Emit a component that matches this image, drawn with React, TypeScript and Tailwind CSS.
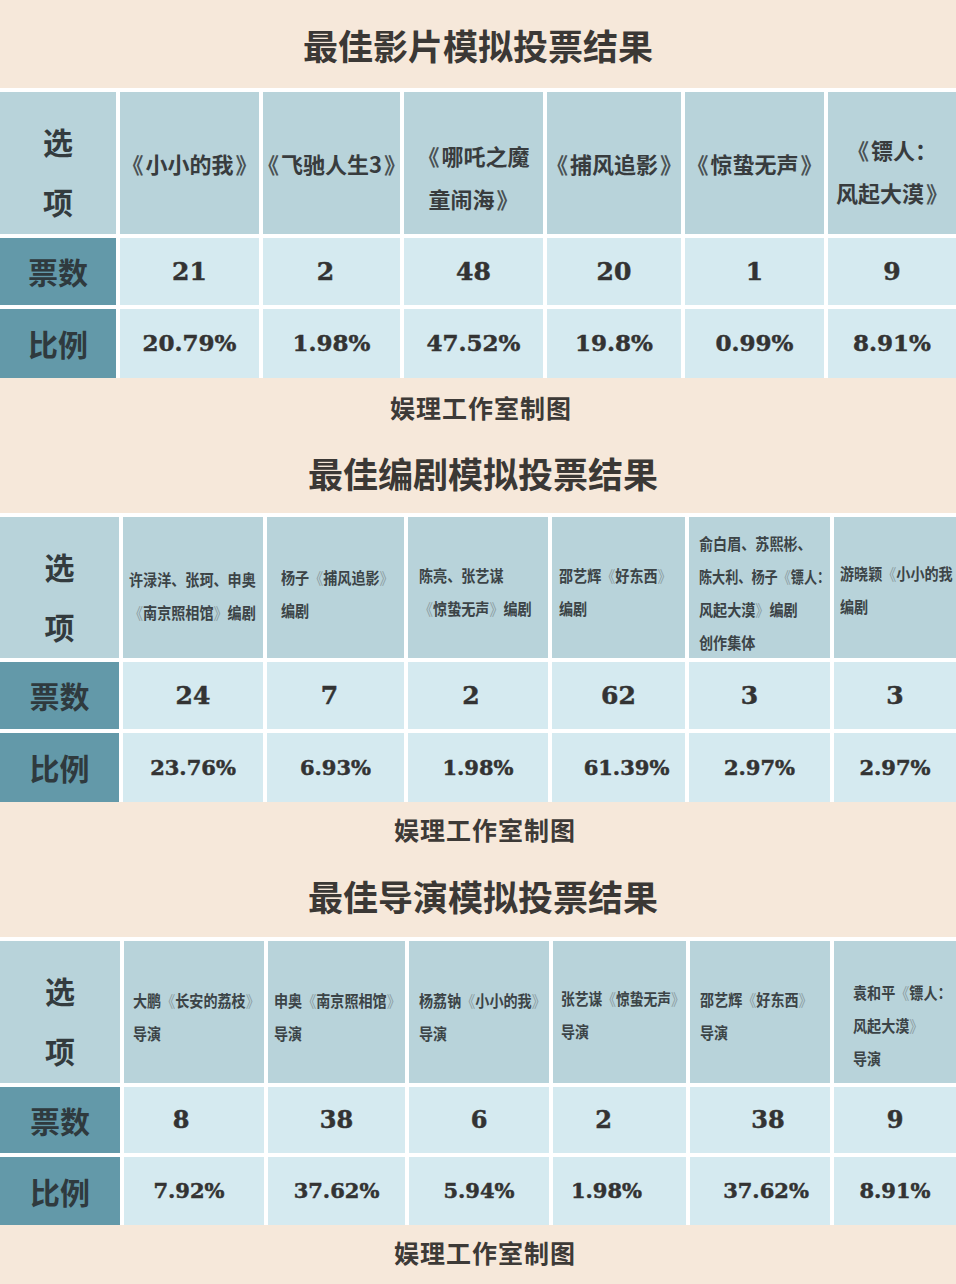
import React from 'react';

type Cell = { v: string; c?: string };
type Header = { lines: string[]; c?: string; sc?: string[] };

type TableDef = {
  title: string;
  titleBox: string;
  captionBox: string;
  cols: string;
  rows: string;
  big: boolean;
  headers: Header[];
  votes: Cell[];
  ratios: Cell[];
  voteSize: string;
  ratioSize: string;
};

const tables: TableDef[] = [
  {
    title: '最佳影片模拟投票结果',
    titleBox: 'h-[88px] pb-[0px] pl-[0px]',
    captionBox: 'h-[60px] pl-[6px]',
    cols: 'grid-cols-[116px_139px_137px_139px_134px_139px_128px]',
    rows: 'grid-rows-[142px_67px_69px]',
    big: true,
    headers: [
      { lines: ['《小小的我》'] },
      { lines: ['《飞驰人生3》'] },
      { lines: ['《哪吒之魔', '童闹海》'], c: 'pt-[28px]' },
      { lines: ['《捕风追影》'] },
      { lines: ['《惊蛰无声》'] },
      { lines: ['《镖人：', '风起大漠》'], c: 'pt-[16px]' },
    ],
    votes: [{ v: '21' }, { v: '2', c: 'mr-[12px]' }, { v: '48' }, { v: '20' }, { v: '1' }, { v: '9' }],
    ratios: [{ v: '20.79%' }, { v: '1.98%' }, { v: '47.52%' }, { v: '19.8%' }, { v: '0.99%' }, { v: '8.91%' }],
    voteSize: 'text-[25px]',
    ratioSize: 'text-[23px]',
  },
  {
    title: '最佳编剧模拟投票结果',
    titleBox: 'h-[75px] pb-[7px] pl-[10px]',
    captionBox: 'h-[56px] pl-[14px]',
    cols: 'grid-cols-[119px_140px_137px_140px_133px_141px_122px]',
    rows: 'grid-rows-[141px_67px_69px]',
    big: false,
    headers: [
      { lines: ['许渌洋、张珂、申奥', '《南京照相馆》编剧'], c: 'pl-[6px] pt-[16px]' },
      { lines: ['杨子《捕风追影》', '编剧'], c: 'pl-[14px] pt-[12px]' },
      { lines: ['陈亮、张艺谋', '《惊蛰无声》编剧'], c: 'pl-[11px] pt-[8px]' },
      { lines: ['邵艺辉《好东西》', '编剧'], c: 'pl-[7px] pt-[8px]' },
      {
        lines: ['俞白眉、苏熙彬、', '陈大利、杨子《镖人：', '风起大漠》编剧', '创作集体'],
        c: 'pl-[10px] pt-[10px]',
        sc: ['scale-x-[0.88]', 'scale-x-[0.82]', 'scale-x-[0.88]', 'scale-x-[0.88]'],
      },
      { lines: ['游晓颖《小小的我', '编剧'], c: 'pl-[6px] pt-[4px]' },
    ],
    votes: [{ v: '24' }, { v: '7', c: 'mr-[12px]' }, { v: '2', c: 'mr-[14px]' }, { v: '62' }, { v: '3', c: 'mr-[20px]' }, { v: '3' }],
    ratios: [{ v: '23.76%' }, { v: '6.93%' }, { v: '1.98%' }, { v: '61.39%', c: 'ml-[16px]' }, { v: '2.97%' }, { v: '2.97%' }],
    voteSize: 'text-[25px]',
    ratioSize: 'text-[21px]',
  },
  {
    title: '最佳导演模拟投票结果',
    titleBox: 'h-[79px] pb-[5px] pl-[10px]',
    captionBox: 'h-[56px] pl-[14px]',
    cols: 'grid-cols-[120px_140px_137px_140px_133px_140px_122px]',
    rows: 'grid-rows-[142px_66px_68px]',
    big: false,
    headers: [
      { lines: ['大鹏《长安的荔枝》', '导演'], c: 'pl-[9px] pt-[10px]' },
      { lines: ['申奥《南京照相馆》', '导演'], c: 'pl-[6px] pt-[10px]' },
      { lines: ['杨荔钠《小小的我》', '导演'], c: 'pl-[10px] pt-[10px]' },
      { lines: ['张艺谋《惊蛰无声》', '导演'], c: 'pl-[8px] pt-[6px]', sc: ['scale-x-[0.86]', 'scale-x-[0.88]'] },
      { lines: ['邵艺辉《好东西》', '导演'], c: 'pl-[10px] pt-[8px]' },
      { lines: ['袁和平《镖人：', '风起大漠》', '导演'], c: 'pl-[19px] pt-[26px]' },
    ],
    votes: [{ v: '8', c: 'mr-[26px]' }, { v: '38' }, { v: '6' }, { v: '2', c: 'mr-[32px]' }, { v: '38', c: 'ml-[16px]' }, { v: '9' }],
    ratios: [{ v: '7.92%', c: 'mr-[10px]' }, { v: '37.62%' }, { v: '5.94%' }, { v: '1.98%', c: 'mr-[26px]' }, { v: '37.62%', c: 'ml-[12px]' }, { v: '8.91%' }],
    voteSize: 'text-[24px]',
    ratioSize: 'text-[21px]',
  },
];

function SmallLine({ text, sc }: { text: string; sc?: string }) {
  const parts = text.split(/([《》])/);
  return (
    <div className={`whitespace-nowrap origin-left text-[16px] leading-[33px] font-bold text-[#3c4447] ${sc ?? 'scale-x-[0.88]'}`}>
      {parts.map((p, i) =>
        p === '《' || p === '》' ? (
          <span key={i} className="text-[#8b9ca1] font-normal">
            {p}
          </span>
        ) : (
          <span key={i}>{p}</span>
        )
      )}
    </div>
  );
}

function BigLine({ text }: { text: string }) {
  const parts = text.split(/([《》])/);
  return (
    <div className="whitespace-nowrap">
      {parts.map((p, i) =>
        p === '《' ? (
          <span key={i} className="mr-[2px] text-[#4a5255]">
            {p}
          </span>
        ) : p === '》' ? (
          <span key={i} className="ml-[2px] text-[#4a5255]">
            {p}
          </span>
        ) : (
          <span key={i}>{p}</span>
        )
      )}
    </div>
  );
}

function Table({ t }: { t: TableDef }) {
  return (
    <div className="flex flex-col">
      <div className={`flex items-center justify-center ${t.titleBox}`}>
        <h1 className="text-[35px] font-bold leading-none text-[#3b3835]">{t.title}</h1>
      </div>
      <div className={`grid ${t.cols} ${t.rows} gap-[4px] bg-white pt-[4px]`}>
        <div className="bg-[#b8d3da] flex flex-col items-center justify-center pt-[16px] text-[30px] font-bold leading-[60px] text-[#333b3e]">
          <span>选</span>
          <span>项</span>
        </div>
        {t.headers.map((h, i) =>
          t.big ? (
            <div
              key={i}
              className={`bg-[#b8d3da] flex flex-col items-center justify-center overflow-visible text-[22px] font-bold leading-[43px] text-[#383c3e] ${h.c ?? ''}`}
            >
              {h.lines.map((l, j) => (
                <BigLine key={j} text={l} />
              ))}
            </div>
          ) : (
            <div key={i} className={`bg-[#b8d3da] flex flex-col justify-center overflow-hidden ${h.c ?? ''}`}>
              {h.lines.map((l, j) => (
                <SmallLine key={j} text={l} sc={h.sc ? h.sc[j] : undefined} />
              ))}
            </div>
          )
        )}
        <div className="bg-[#6399a9] flex items-center justify-center text-[30px] font-bold text-[#2f3a3e]">票数</div>
        {t.votes.map((c, i) => (
          <div key={i} className="bg-[#d5eaf0] flex items-center justify-center">
            <span className={`font-['DejaVu_Serif',serif] font-bold text-[#333333] [-webkit-text-stroke:0.5px_#333333] ${t.voteSize} ${c.c ?? ''}`}>{c.v}</span>
          </div>
        ))}
        <div className="bg-[#6399a9] flex items-center justify-center text-[30px] font-bold text-[#2f3a3e]">比例</div>
        {t.ratios.map((c, i) => (
          <div key={i} className="bg-[#d5eaf0] flex items-center justify-center">
            <span className={`font-['DejaVu_Serif',serif] font-bold text-[#333333] [-webkit-text-stroke:0.5px_#333333] ${t.ratioSize} ${c.c ?? ''}`}>{c.v}</span>
          </div>
        ))}
      </div>
      <div className={`flex items-center justify-center ${t.captionBox}`}>
        <span className="text-[25px] font-bold tracking-[1px] text-[#3d3a37]">娱理工作室制图</span>
      </div>
    </div>
  );
}

export default function App() {
  return (
    <div className="w-[956px] h-[1284px] overflow-hidden bg-[#f6e8da] font-['Noto_Sans_CJK_SC','Noto_Sans',sans-serif]">
      {tables.map((t, i) => (
        <Table key={i} t={t} />
      ))}
    </div>
  );
}
